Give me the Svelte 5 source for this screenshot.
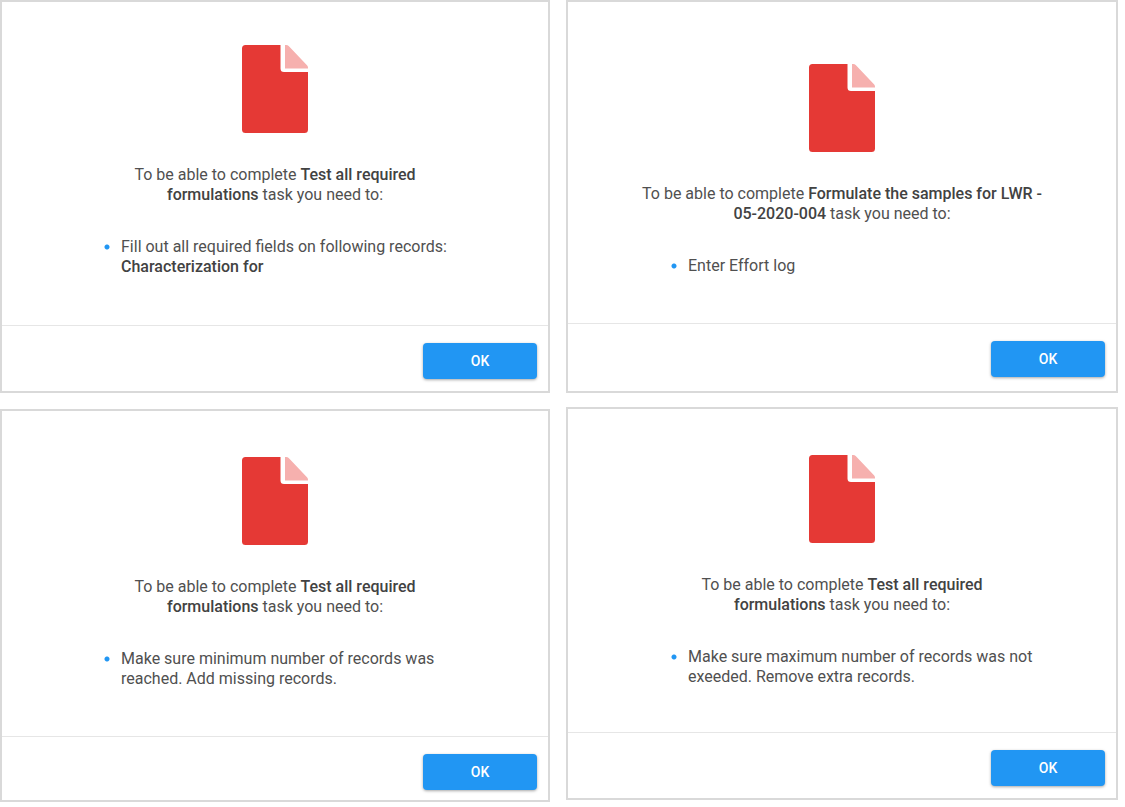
<script>
    const columns = [
        [
            {
                name: "required-fields",
                task: "Test all required formulations",
                text: "Fill out all required fields on following records:",
                record: "Characterization for",
            },
            {
                name: "minimum-records",
                task: "Test all required formulations",
                text: "Make sure minimum number of records was reached. Add missing records.",
            },
        ],
        [
            {
                name: "effort-log",
                task: "Formulate the samples for LWR - 05-2020-004",
                text: "Enter Effort log",
            },
            {
                name: "maximum-records",
                task: "Test all required formulations",
                text: "Make sure maximum number of records was not exeeded. Remove extra records.",
            },
        ],
    ];
</script>

<main class="board">
    {#each columns as dialogs}
        <div class="column">
            {#each dialogs as dialog}
                <section class="dialog {dialog.name}">
                    <div class="body">
                        <svg class="file-icon" viewBox="0 0 66 88" aria-hidden="true">
                            <path
                                d="M3.5 0H38.5V23.5a3.5 3.5 0 0 0 3.5 3.5H66V84.5a3.5 3.5 0 0 1-3.5 3.5H3.5A3.5 3.5 0 0 1 0 84.5V3.5A3.5 3.5 0 0 1 3.5 0Z"
                                fill="#e53935"
                            />
                            <path
                                d="M43 0h1.2a3.5 3.5 0 0 1 2.5 1L65.2 20.5a3 3 0 0 1 .8 2v1H43Z"
                                fill="#f6b0ae"
                            />
                        </svg>
                        <p class="intro">
                            To be able to complete <strong>{dialog.task}</strong> task you need to:
                        </p>
                        <ul>
                            <li>
                                {dialog.text}
                                {#if dialog.record}
                                    <strong>{dialog.record}</strong>
                                {/if}
                            </li>
                        </ul>
                    </div>
                    <footer>
                        <button type="button">OK</button>
                    </footer>
                </section>
            {/each}
        </div>
    {/each}
</main>

<style>
    :global(body) {
        margin: 0;
        background: #fff;
    }

    .board {
        display: grid;
        grid-template-columns: 275fr 276fr;
        gap: 16px;
        padding-right: 7px;
        font-family: Roboto, sans-serif;
        font-size: 16px;
        line-height: 20px;
        color: #505050;
    }

    .column {
        display: flex;
        flex-direction: column;
        gap: 16px;
    }

    .column:last-child {
        gap: 14px;
    }

    .dialog {
        display: flex;
        flex-direction: column;
        box-sizing: border-box;
        min-height: 393px;
        border: 2px solid #d9d9d9;
    }

    .body {
        display: flex;
        flex: 1;
        flex-direction: column;
        align-items: center;
        padding: 43px 24px 24px;
    }

    .effort-log .body {
        padding-top: 62px;
    }

    .minimum-records .body,
    .maximum-records .body {
        padding-top: 46px;
    }

    .file-icon {
        width: 66px;
        height: 88px;
    }

    .intro {
        max-width: 320px;
        margin: 32px 0 0;
        text-align: center;
    }

    .effort-log .intro {
        max-width: 410px;
    }

    strong {
        font-weight: 500;
        color: #424242;
    }

    ul {
        box-sizing: border-box;
        width: 384px;
        margin: 32px 0 0;
        padding: 0 0 0 21px;
        list-style: none;
    }

    li {
        padding-left: 17px;
        background: radial-gradient(circle at 3px 10px, #2196f3 2px, transparent 3px);
    }

    footer {
        display: flex;
        justify-content: flex-end;
        padding: 17px 11px 12px;
        border-top: 1px solid #e6e6e6;
    }

    .effort-log footer {
        padding-bottom: 14px;
    }

    .minimum-records footer {
        padding-bottom: 10px;
    }

    .maximum-records footer {
        padding-bottom: 12px;
    }

    button {
        width: 114px;
        height: 36px;
        border: none;
        border-radius: 4px;
        background: #2196f3;
        color: #fff;
        font-family: inherit;
        font-size: 14px;
        font-weight: 500;
        cursor: pointer;
        box-shadow: 0 1px 3px rgba(0, 0, 0, 0.35);
    }
</style>
